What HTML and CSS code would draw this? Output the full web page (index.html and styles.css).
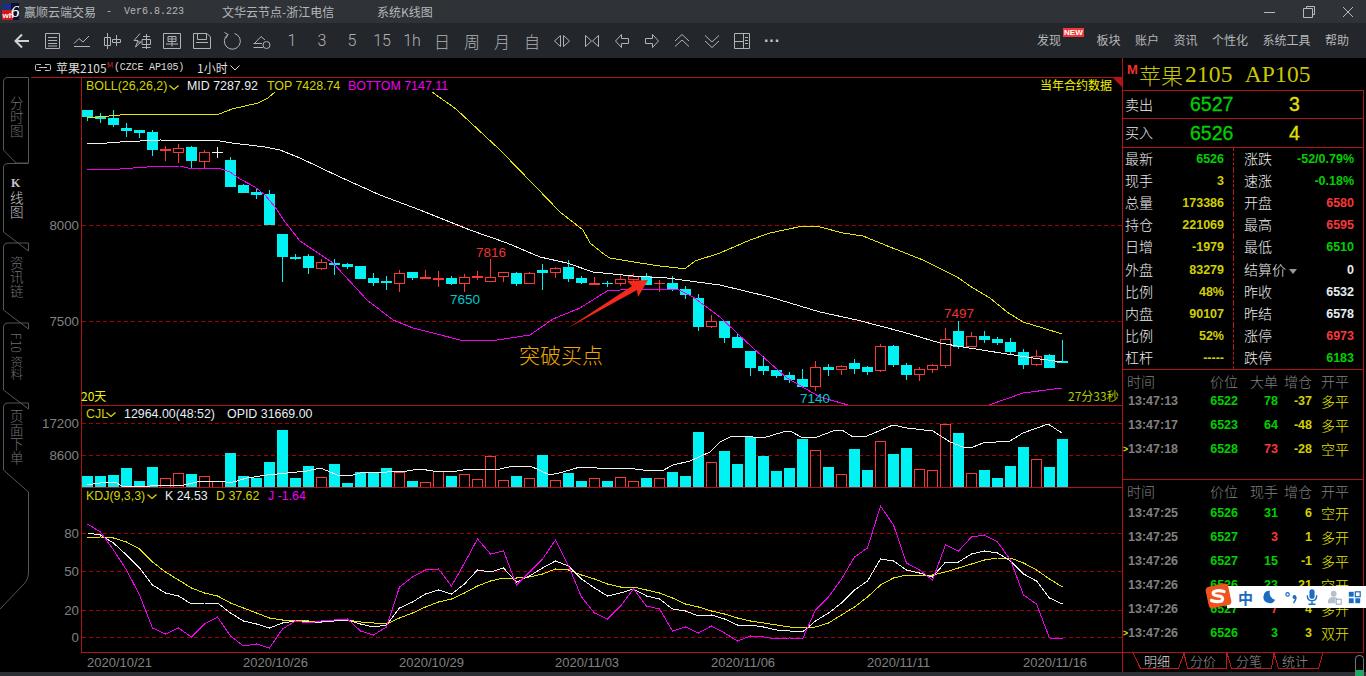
FILE: index.html
```html
<!DOCTYPE html>
<html lang="zh-CN">
<head>
<meta charset="utf-8">
<title>赢顺云端交易</title>
<link rel="stylesheet" href="styles.css">
</head>
<body>
<header class="titlebar">
  <svg class="logo" viewBox="0 0 17 17" width="17" height="17"><rect width="17" height="17" fill="#0c1030"/><rect x="0" y="0" width="9" height="7" fill="#1b2f80"/><rect x="0" y="7" width="11" height="10" fill="#d01818"/><text x="0.5" y="15" class="logo-wh">wh</text><text x="9" y="14" class="logo-six">6</text></svg>
  <span class="app-name">赢顺云端交易</span>
  <span class="app-ver">-  Ver6.8.223</span>
  <span class="app-node">文华云节点-浙江电信</span>
  <span class="app-view">系统K线图</span>
  <div class="winctl">
    <svg viewBox="0 0 12 12" width="12" height="12"><path d="M0 6.500H11"/></svg>
    <svg viewBox="0 0 12 12" width="12" height="12"><path d="M3.500 2.500V0.500H11.500V8.500H9.500M0.500 2.500H9.500V11.500H0.500Z"/></svg>
    <svg viewBox="0 0 12 12" width="12" height="12"><path d="M1 1L11 11M11 1L1 11"/></svg>
  </div>
</header>

<nav class="toolbar">
  <div class="tools">
    <span class="tool"><svg viewBox="0 0 20 20" class="thick"><path d="M17 10H4M10 3.500L3.500 10L10 16.500"/></svg></span>
    <span class="tool"><svg viewBox="0 0 20 20"><path d="M3.500 2.500H17.500V17.500H3.500ZM6 6.500H15M6 9.500H15M6 12.500H15M6 15H15"/></svg></span>
    <span class="tool"><svg viewBox="0 0 20 20"><path d="M2 15.500H18M2 12.500L7 7.500L11 11L17 5"/></svg></span>
    <span class="tool"><svg viewBox="0 0 20 20"><path d="M5.500 2V18M2.500 6.500H8.500V14.500H2.500ZM14.500 4V15M10.500 8.500H18.500V11.500H10.500Z"/></svg></span>
    <span class="tool"><svg viewBox="0 0 20 20"><path d="M8 2.500L2 9.500H6L3.500 16L9 11H5.500M11 5.500H18M10 8.500H18.500V13.500H10ZM14.500 3V18M10 16.500H18.500"/></svg></span>
    <span class="tool"><svg viewBox="0 0 20 20"><path d="M1.500 2.500H18.500V17.500H1.500ZM6 5.500H14V10.500H6ZM6 8H14M10 5.500V15.500M4 13H16"/></svg></span>
    <span class="tool"><svg viewBox="0 0 20 20"><path d="M1.500 2.500H15L18.500 6V17.500H1.500ZM5.500 2.500V8.500H14.500V2.500M4 11.500H16"/></svg></span>
    <span class="tool"><svg viewBox="0 0 20 20"><path d="M6 3.500A8 8 0 1 0 12.500 2.500M2.500 1.500L6 3.500L4 7"/></svg></span>
    <span class="tool"><svg viewBox="0 0 20 20"><path d="M1.500 16.500H11M3 12L9 5.500L13 9M1.500 12.500H10"/><circle cx="14.500" cy="14" r="3.500"/></svg></span>
    <span class="tool tool-txt">1</span>
    <span class="tool tool-txt">3</span>
    <span class="tool tool-txt">5</span>
    <span class="tool tool-txt">15</span>
    <span class="tool tool-txt">1h</span>
    <span class="tool tool-txt">日</span>
    <span class="tool tool-txt">周</span>
    <span class="tool tool-txt">月</span>
    <span class="tool tool-txt">自</span>
    <span class="tool"><svg viewBox="0 0 20 20"><path d="M8.500 4.500L2.500 10L8.500 15.500ZM11.500 4.500L17.500 10L11.500 15.500Z"/></svg></span>
    <span class="tool"><svg viewBox="0 0 20 20"><path d="M3.500 4.500L9.500 10L3.500 15.500ZM16.500 4.500L10.500 10L16.500 15.500Z"/></svg></span>
    <span class="tool"><svg viewBox="0 0 20 20"><path d="M3.500 10L9.500 3.500V7.500H16.500V12.500H9.500V16.500Z"/></svg></span>
    <span class="tool"><svg viewBox="0 0 20 20"><path d="M16.500 10L10.500 3.500V7.500H3.500V12.500H10.500V16.500Z"/></svg></span>
    <span class="tool"><svg viewBox="0 0 20 20"><path d="M3 10L10 3.500L17 10M3 15.500L10 9L17 15.500"/></svg></span>
    <span class="tool"><svg viewBox="0 0 20 20"><path d="M3 4.500L10 11L17 4.500M3 10L10 16.500L17 10"/></svg></span>
    <span class="tool"><svg viewBox="0 0 20 20"><path d="M2.500 2.500H17.500V17.500H2.500ZM11.500 2.500V17.500M2.500 10.500H11.500M13 6.500H16M13 9.500H16M13 12.500H16"/></svg></span>
    <span class="tool tool-dots">···</span>
  </div>
  <div class="menu">
    <span class="menu-new">发现<b class="badge">NEW</b></span>
    <span>板块</span><span>账户</span><span>资讯</span><span>个性化</span><span>系统工具</span><span>帮助</span>
  </div>
</nav>

<main class="main">
  <aside class="sidetabs">
    <svg class="tabshape" viewBox="0 0 29 614" width="29" height="614">
      <path d="M28.500 19.500V105H16L3.500 92V24Q3.500 19.500 8 19.500Z"/>
      <path d="M28.500 105.500H8Q3.500 105.500 3.500 110V174L28.500 193"/>
      <path d="M28.500 193V185H8Q3.500 185 3.500 190V252L28.500 271"/>
      <path d="M28.500 271V265H8Q3.500 265 3.500 270V332L28.500 351"/>
      <path d="M28.500 351V345H8Q3.500 345 3.500 350V412L28.500 434V515Q28.500 522 22 528L0 551"/>
    </svg>
    <span class="vtab">分时图</span>
    <span class="vtab vtab-on"><b>K</b>线图</span>
    <span class="vtab">资讯链</span>
    <span class="vtab vtab-side">F10 资料</span>
    <span class="vtab">页面下单</span>
  </aside>

  <section class="chartcol">
    <div class="charthead">
      <svg class="linkicon" viewBox="0 0 16 8" width="16" height="8"><path d="M6 .5H1.500Q.5 .5 .5 1.500V5.500Q.5 6.500 1.500 6.500H6M10 .5H14.500Q15.500 .5 15.500 1.500V5.500Q15.500 6.500 14.500 6.500H10M4 3.500H12"/></svg>
      <span class="sym">苹果2105<sup>M</sup></span>
      <span class="code">(CZCE AP105)</span>
      <span class="period">1小时</span>
      <svg class="chev" viewBox="0 0 10 6" width="10" height="6"><path d="M.5 .5L5 5L9.500 .5"/></svg>
    </div>
    <svg id="chart" class="chart" viewBox="29 77 1093 595" width="1093" height="595">
      <g id="layer"></g>
      <g class="frame">
        <path d="M31 77.500H1122M81.500 77V652.500M81 405.500H1122M81 487.500H1122M81 652.500H1122"/>
      </g>
      <polygon class="corner" points="1113,78 1122,78 1122,87"/>
      <polygon class="arrow" points="568,328 632,286 627,281 648,280 638,297 637,290"/>

      <text class="lg y" x="86" y="90">BOLL(26,26,2)</text>
      <path class="chv" d="M169.500 85.500L174 89.500L178.500 85.500"/>
      <text class="lg w" x="187" y="90">MID 7287.92</text>
      <text class="lg y" x="267" y="90">TOP 7428.74</text>
      <text class="lg m" x="348" y="90">BOTTOM 7147.11</text>
      <text class="cj y2" x="1040" y="90">当年合约数据</text>

      <text class="mk r" x="476" y="257">7816</text>
      <text class="mk c" x="450" y="304">7650</text>
      <text class="mk r" x="944" y="318">7497</text>
      <text class="mk c" x="800" y="403">7140</text>
      <text class="cj y2" x="81" y="401">20天</text>
      <text class="cj y3" x="1068" y="401">27分33秒</text>
      <text class="note" x="519" y="363">突破买点</text>

      <text class="ax" x="79" y="230">8000</text>
      <text class="ax" x="79" y="326">7500</text>
      <text class="ax" x="79" y="428">17200</text>
      <text class="ax" x="79" y="460">8600</text>
      <text class="ax" x="79" y="538">80</text>
      <text class="ax" x="79" y="576">50</text>
      <text class="ax" x="79" y="615">20</text>
      <text class="ax" x="79" y="642">0</text>

      <text class="lg y" x="86" y="418">CJL</text>
      <path class="chv" d="M106.500 412.500L111 416.500L115.500 412.500"/>
      <text class="lg w" x="124" y="418">12964.00(48:52)</text>
      <text class="lg w" x="227" y="418">OPID 31669.00</text>
      <text class="lg y" x="86" y="500">KDJ(9,3,3)</text>
      <path class="chv" d="M147.500 494.500L152 498.500L156.500 494.500"/>
      <text class="lg w" x="165" y="500">K 24.53</text>
      <text class="lg y" x="216" y="500">D 37.62</text>
      <text class="lg m" x="268" y="500">J -1.64</text>

      <text class="dt" x="87" y="667">2020/10/21</text>
      <text class="dt" x="243" y="667">2020/10/26</text>
      <text class="dt" x="399" y="667">2020/10/29</text>
      <text class="dt" x="555" y="667">2020/11/03</text>
      <text class="dt" x="711" y="667">2020/11/06</text>
      <text class="dt" x="867" y="667">2020/11/11</text>
      <text class="dt" x="1023" y="667">2020/11/16</text>
    </svg>
  </section>

  <aside class="quote">
    <div class="qtitle"><b class="qm">M</b><span class="qname">苹果</span><span class="qcode">2105&nbsp;&nbsp;AP105</span></div>
    <div class="qbox">
      <div class="bidask bid1"><span class="lb">卖出</span><span class="bp">6527</span><span class="bv">3</span></div>
      <div class="bidask bid2"><span class="lb">买入</span><span class="bp">6526</span><span class="bv">4</span></div>
      <div class="qgrid">
        <div class="qc"><span class="lb">最新</span><span class="v g">6526</span></div><div class="qc"><span class="lb">涨跌</span><span class="v g">-52/0.79%</span></div>
        <div class="qc"><span class="lb">现手</span><span class="v y">3</span></div><div class="qc"><span class="lb">速涨</span><span class="v g">-0.18%</span></div>
        <div class="qc"><span class="lb">总量</span><span class="v y">173386</span></div><div class="qc"><span class="lb">开盘</span><span class="v r">6580</span></div>
        <div class="qc"><span class="lb">持仓</span><span class="v y">221069</span></div><div class="qc"><span class="lb">最高</span><span class="v r">6595</span></div>
        <div class="qc"><span class="lb">日增</span><span class="v y">-1979</span></div><div class="qc"><span class="lb">最低</span><span class="v g">6510</span></div>
        <div class="qc"><span class="lb">外盘</span><span class="v y">83279</span></div><div class="qc"><span class="lb">结算价<i class="tri"></i></span><span class="v w">0</span></div>
        <div class="qc"><span class="lb">比例</span><span class="v y">48%</span></div><div class="qc"><span class="lb">昨收</span><span class="v w">6532</span></div>
        <div class="qc"><span class="lb">内盘</span><span class="v y">90107</span></div><div class="qc"><span class="lb">昨结</span><span class="v w">6578</span></div>
        <div class="qc"><span class="lb">比例</span><span class="v y">52%</span></div><div class="qc"><span class="lb">涨停</span><span class="v r">6973</span></div>
        <div class="qc"><span class="lb">杠杆</span><span class="v y">-----</span></div><div class="qc"><span class="lb">跌停</span><span class="v g">6183</span></div>
      </div>
      <div class="ticks ticks-a">
        <div class="tr th th-a"><i></i><span>时间</span><span>价位</span><span>大单</span><span>增仓</span><span>开平</span></div>
        <div class="tr"><i></i><span class="t">13:47:13</span><span class="g">6522</span><span class="g">78</span><span class="y">-37</span><span class="k">多平</span></div>
        <div class="tr"><i></i><span class="t">13:47:17</span><span class="g">6523</span><span class="g">64</span><span class="y">-48</span><span class="k">多平</span></div>
        <div class="tr"><i>&gt;</i><span class="t">13:47:18</span><span class="g">6528</span><span class="r">73</span><span class="y">-28</span><span class="k">空平</span></div>
      </div>
      <div class="ticks ticks-b">
        <div class="tr th th-b"><i></i><span>时间</span><span>价位</span><span>现手</span><span>增仓</span><span>开平</span></div>
        <div class="tr"><i></i><span class="t">13:47:25</span><span class="g">6526</span><span class="g">31</span><span class="y">6</span><span class="k">空开</span></div>
        <div class="tr"><i></i><span class="t">13:47:25</span><span class="g">6527</span><span class="r">3</span><span class="y">1</span><span class="k">多开</span></div>
        <div class="tr"><i></i><span class="t">13:47:26</span><span class="g">6527</span><span class="g">15</span><span class="y">-1</span><span class="k">多平</span></div>
        <div class="tr"><i></i><span class="t">13:47:26</span><span class="g">6526</span><span class="g">23</span><span class="y">21</span><span class="k">空开</span></div>
        <div class="tr"><i></i><span class="t">13:47:26</span><span class="g">6527</span><span class="r">7</span><span class="y">4</span><span class="k">多开</span></div>
        <div class="tr"><i>&gt;</i><span class="t">13:47:26</span><span class="g">6526</span><span class="g">3</span><span class="y">3</span><span class="k">双开</span></div>
      </div>
    </div>
    <div class="qtabs">
      <svg class="qtabshape" viewBox="0 0 200 17" width="200" height="17"><path d="M10 0L17.500 15.500H55.500L61 0M61 0L64.500 15.500H103.500L104 0M104 0L108.500 15.500H148.500L151 0M151 0L155.500 15.500H195.500L200 0"/></svg>
      <span class="qtab qtab-on">明细</span><span class="qtab">分价</span><span class="qtab">分笔</span><span class="qtab">统计</span>
    </div>
  </aside>
</main>
<footer class="statusbar"></footer>

<div class="pill"><span></span></div>

<div class="ime">
  <svg class="ime-logo" viewBox="0 0 28 28" width="28" height="28"><rect x="3" y="3" width="23" height="22" rx="4" fill="#f0541e" transform="rotate(-12 14 14)"/><path d="M20 9.500Q13 7.500 9.500 10Q8 12.500 12 13.500L17 14.500Q20 16.500 17.500 19Q13 20.500 7.500 18.500" fill="none" stroke="#fff" stroke-width="3.200" stroke-linecap="round"/></svg>
  <span class="ime-zh">中</span>
  <svg viewBox="0 0 16 16" width="14" height="14"><path d="M9 1A7 7 0 1 0 15 11A8 8 0 0 1 9 1Z" fill="#1a6cc0"/></svg>
  <svg viewBox="0 0 14 16" width="12" height="14"><circle cx="3" cy="5" r="2" fill="none" stroke="#1a6cc0" stroke-width="1.400"/><circle cx="11" cy="8" r="2.200" fill="#1a6cc0"/><path d="M12.800 8Q12.800 12 10 15" fill="none" stroke="#1a6cc0" stroke-width="1.800"/></svg>
  <svg viewBox="0 0 14 20" width="12" height="18"><rect x="4" y="1" width="6" height="11" rx="3" fill="#1a6cc0"/><path d="M1.500 8Q1.500 14.500 7 14.500Q12.500 14.500 12.500 8M7 14.500V18M3 18.500H11" fill="none" stroke="#1a6cc0" stroke-width="1.600"/></svg>
  <svg viewBox="0 0 18 18" width="15" height="15"><circle cx="8" cy="4.500" r="3.500" fill="#b4c0cc"/><path d="M1 15Q1 8.500 8 8.500Q12 8.500 13 10.500H10V16H1Z" fill="#b4c0cc"/><rect x="11" y="11" width="6" height="6" fill="#fff" stroke="#8494a4"/></svg>
  <svg class="ime-grid" viewBox="0 0 16 16" width="13" height="13"><rect x="1" y="1" width="6" height="6" fill="#1a6cc0"/><rect x="9" y="1" width="6" height="6" fill="none" stroke="#1a6cc0" stroke-width="1.500"/><rect x="1" y="9" width="6" height="6" fill="#1a6cc0"/><rect x="9" y="9" width="6" height="6" fill="#1a6cc0"/></svg>
</div>

<script src="chart.js"></script>
</body>
</html>
```

FILE: styles.css
```css
* { box-sizing: border-box; }
html, body { margin: 0; padding: 0; }
body {
  width: 1366px; height: 676px; overflow: hidden; position: relative;
  background: #000; color: #ddd;
  display: flex; flex-direction: column;
  font: 12px "Liberation Sans", "Noto Sans CJK SC", sans-serif;
}

/* title bar */
.titlebar {
  height: 23px; flex: none; background: #2f3338; color: #b4b7ba;
  display: flex; align-items: center; padding-left: 2px;
  font: 12px "Noto Sans CJK SC", sans-serif;
}
.logo { flex: none; }
.logo-wh { font: bold 8px "Liberation Sans", sans-serif; fill: #fff; }
.logo-six { font: italic 17px "Liberation Serif", serif; fill: #fff; }
.app-name { margin-left: 5px; width: 82px; }
.app-ver { font: 10px "Liberation Mono", monospace; width: 116px; white-space: pre; }
.app-node { width: 155px; }
.winctl { margin-left: auto; display: flex; gap: 27px; padding-right: 12px; }
.winctl svg { fill: none; stroke: #b8bbbe; stroke-width: 1; }

/* toolbar */
.toolbar {
  height: 35px; flex: none; background: #23262b;
  display: flex; align-items: center; justify-content: space-between;
  padding: 0 17px 0 7px; color: #b4b7ba;
}
.tools { display: flex; }
.tool {
  width: 30px; height: 24px; display: flex; align-items: center; justify-content: center;
}
.tool svg { width: 20px; height: 20px; fill: none; stroke: #b0b3b6; stroke-width: 1; }
.tool svg.thick { stroke: #d0d3d6; stroke-width: 2; }
.tool-txt { font: 300 16px Roboto, "Noto Sans CJK SC", sans-serif; color: #b0b3b6; }
.tool-dots { font: bold 16px "Liberation Sans", sans-serif; color: #c0c3c6; letter-spacing: 0; }
.menu { display: flex; gap: 14.500px; margin-bottom: 2px; font: 12px "Noto Sans CJK SC", sans-serif; }
.menu-new { position: relative; margin-right: 21px; }
.badge {
  position: absolute; left: 26px; top: -3px; width: 21px; height: 9px;
  background: #f03a3a; color: #fff; font: bold 8px/9px "Liberation Sans", sans-serif; text-align: center;
}

/* main */
.main { height: 614px; flex: none; display: flex; }

.sidetabs {
  width: 29px; flex: none; position: relative; padding-top: 19px;
  display: flex; flex-direction: column;
}
.tabshape { position: absolute; left: 0; top: 0; fill: none; stroke: #555; stroke-width: 1; }
.vtab {
  height: 80px; width: 29px; padding-left: 3px; display: flex; align-items: center; justify-content: center;
  writing-mode: vertical-rl; position: relative;
  font: 300 13.500px/1 "Noto Sans CJK SC", sans-serif; color: #707070; letter-spacing: .5px;
}
.vtab b { font: bold 12px "Liberation Serif", serif; writing-mode: horizontal-tb; }
.vtab-on { color: #c8c8c8; }
.vtab-side { font-size: 12.500px; letter-spacing: 0; white-space: pre; }

.chartcol { width: 1093px; flex: none; display: flex; flex-direction: column; }
.charthead {
  height: 19px; flex: none; display: flex; align-items: center; padding-left: 6px;
  font: 12px "Noto Sans CJK SC", sans-serif; color: #ddd;
}
.linkicon { fill: none; stroke: #c0c0c0; stroke-width: 1; flex: none; }
.sym { margin-left: 5px; width: 58px; }
.sym sup { color: #d02020; font-size: 8px; line-height: 0; vertical-align: 5px; }
.code { font: 10px "Liberation Mono", monospace; letter-spacing: -.15px; width: 83px; white-space: pre; }
.period { width: 33px; }
.chev { fill: none; stroke: #ddd; stroke-width: 1; }
.chart { display: block; flex: none; }
.frame path { fill: none; stroke: #b01414; stroke-width: 1; shape-rendering: crispEdges; }
.corner { fill: #b01414; }
.arrow { fill: #f5281e; }

.chart text { white-space: pre; }
.lg { font: 12.400px "Liberation Sans", sans-serif; }
.lg.y { fill: #d4d400; }
.lg.w { fill: #e8eef4; }
.lg.m { fill: #f000f0; }
.chv { fill: none; stroke: #e0e000; stroke-width: 1.200; }
.cj { font: 12px "Noto Sans CJK SC", sans-serif; }
.y2 { fill: #f0f000; }
.y3 { fill: #b4c800; }
.mk { font: 13.500px "Liberation Sans", sans-serif; }
.mk.r { fill: #f03232; }
.mk.c { fill: #00c8d0; }
.note { font: 300 21px "Noto Sans CJK SC", sans-serif; fill: #eeaa00; }
.ax { font: 13.300px "Liberation Sans", sans-serif; fill: #808080; text-anchor: end; }
.dt { font: 13px "Liberation Sans", sans-serif; fill: #808080; }

.dash { stroke: #a00000; stroke-width: 1; stroke-dasharray: 4 3; fill: none; shape-rendering: crispEdges; }
.ln { fill: none; stroke-width: 1; shape-rendering: crispEdges; }
.ln-y { stroke: #e6e600; }
.ln-w { stroke: #f0f0f0; }
.ln-m { stroke: #f000f0; }
.cb { fill: #00f2f2; shape-rendering: crispEdges; }
.cw { stroke: #00f2f2; stroke-width: 1; fill: none; shape-rendering: crispEdges; }
.rb { fill: #f83838; shape-rendering: crispEdges; }
.rw { stroke: #f83838; stroke-width: 1; fill: none; shape-rendering: crispEdges; }
.wb { stroke: #f0f0f0; stroke-width: 1; fill: none; shape-rendering: crispEdges; }

/* quote panel */
.quote { width: 244px; flex: none; border-left: 1px solid #b01414; display: flex; flex-direction: column; position: relative; }
.qtitle { height: 32px; flex: none; display: flex; align-items: flex-start; padding: 3px 0 0 4px; color: #c8c800; }
.qm { font: bold 13px "Liberation Sans", sans-serif; color: #f03030; width: 12px; margin-top: 1px; }
.qname { font: 300 22px/26px "Noto Sans CJK SC", sans-serif; width: 46px; }
.qcode { font: 23.500px/27px "Liberation Serif", serif; word-spacing: 0; letter-spacing: .15px; }
.qbox { height: 563px; flex: none; width: 242px; margin-left: -1px; border: 1px solid #b01414; display: flex; flex-direction: column; }
.lb { font: 300 14px/1 "Noto Sans CJK SC", sans-serif; color: #eee; white-space: nowrap; margin-bottom: 2px; }
.bidask { display: grid; grid-template-columns: 65px 99px 1fr; align-items: center; padding-left: 2px; border-bottom: 1px solid #b01414; flex: none; }
.bid1 { height: 28px; }
.bid2 { height: 29px; }
.bp { font: 19.500px "Liberation Sans", sans-serif; color: #00d000; -webkit-text-stroke: .3px #00d000; }
.bv { font: 19.500px "Liberation Sans", sans-serif; color: #e0e000; -webkit-text-stroke: .3px #e0e000; }
.qgrid {
  height: 222px; flex: none; display: grid; grid-template-columns: 111px 1fr; grid-auto-rows: 22.100px;
  border-bottom: 1px solid #b01414;
}
.qc { display: flex; justify-content: space-between; align-items: center; padding: 0 9px 0 10px; }
.qc:nth-child(odd) { padding: 0 9px 0 2px; border-right: 1px dashed #c01818; }
.v { font: bold 12.500px "Liberation Sans", sans-serif; }
.tri {
  display: inline-block; width: 0; height: 0; margin-left: 3px; vertical-align: 1px;
  border: 4px solid transparent; border-top: 5px solid #999; border-bottom: 0;
}
.g { color: #00d000; }
.y { color: #d0d000; }
.r { color: #f83838; }
.w { color: #e4ecf4; }
.k { color: #e8e800; }
.ticks-a { height: 110px; flex: none; border-bottom: 1px solid #b01414; }
.ticks-b { flex: 1; }
.tr {
  display: grid; grid-template-columns: 5px 82px 28px 40px 34px 37px; height: 24px; align-items: center;
  font: bold 12.500px "Liberation Sans", sans-serif; white-space: nowrap;
}
.tr i { font: bold 8.500px "Liberation Sans", sans-serif; color: #e8e800; }
.tr span:nth-child(4), .tr span:nth-child(5) { text-align: right; }
.tr span:nth-child(3) { text-align: right; }
.tr span:last-child { padding-left: 9px; font: 300 14px "Noto Sans CJK SC", sans-serif; }
.t { color: #808080; }
.th { align-items: start; padding-top: 3px; color: #808080; font: 300 14px/16px "Noto Sans CJK SC", sans-serif; }
.th span:last-child { font: 300 14px/16px "Noto Sans CJK SC", sans-serif; }
.th-a { height: 19px; }
.th-b { height: 21px; }
.th span:nth-child(2) { margin-left: -1px; }

.qtabs { position: relative; height: 19px; flex: none; display: flex; padding-left: 11px; font: 300 13px/15px "Noto Sans CJK SC", sans-serif; }
.qtabshape { position: absolute; left: 0; top: 0; fill: none; stroke: #c01818; stroke-width: 1; shape-rendering: crispEdges; }
.qtab { width: 46px; text-align: center; color: #999; position: relative; }
.qtab-on { color: #ddd; }

.statusbar { height: 4px; flex: none; background: #2c2f34; }

.pill {
  position: absolute; left: 1355px; top: 655px; width: 9px; height: 21px;
  border: 1px solid #777; border-bottom: 0; border-radius: 5px 5px 0 0; overflow: hidden;
  display: flex; align-items: flex-end;
}
.pill span { display: block; width: 100%; height: 6px; background: #10b060; }

.ime {
  position: absolute; left: 1227px; top: 586px; width: 139px; height: 22px; background: #fff;
  display: flex; align-items: center; gap: 9px; padding-left: 11px;
}
.ime svg { flex: none; }
.ime-logo { position: absolute; left: -23px; top: -4px; }
.ime-zh { font: bold 15px "Noto Sans CJK SC", sans-serif; color: #1a6cc0; }
.ime-grid { margin-left: -3px; }
```

FILE: chart.js
```js
(function () {
  var NS = 'http://www.w3.org/2000/svg';
  var layer = document.getElementById('layer');
  function add(tag, attrs) {
    var e = document.createElementNS(NS, tag);
    for (var k in attrs) e.setAttribute(k, attrs[k]);
    layer.appendChild(e);
    return e;
  }
  function line(cls, pts) {
    add('polyline', { 'class': 'ln ' + cls, points: pts.map(function (p) { return p.join(','); }).join(' ') });
  }
  function series(cls, ys) {
    line(cls, ys.map(function (y, i) { return [87.5 + 13 * i, y]; }));
  }

  [225, 321, 423, 455, 533, 571, 610, 637].forEach(function (y) {
    add('path', { 'class': 'dash', d: 'M82 ' + (y + 0.5) + 'H1122' });
  });

  // [type, body top, body bottom, wick high, wick low]
  var candles = [
    ['c',110,117,110,121],['c',116,119,113,123],['c',118,125,110,127],['c',128,131,123,137],
    ['c',130,133,130,138],['c',132,150,130,156],['r',149,151,146,161],['r',148,153,144,163],
    ['c',147,161,146,168],['r',152,162,150,168],['w',152,153,147,158],['c',160,187,157,187],
    ['c',185,193,184,193],['c',192,195,188,199],['c',194,225,190,225],['c',234,257,234,282],
    ['c',257,259,254,260],['c',256,268,254,274],['r',262,269,259,270],['c',263,265,259,275],
    ['c',264,267,263,269],['c',266,279,266,279],['c',278,283,273,286],['c',281,283,276,290],
    ['r',273,284,270,292],['c',272,278,272,280],['r',277,279,270,279],['r',278,280,271,287],
    ['c',278,284,276,285],['r',277,284,274,292],['r',276,278,271,280],['r',277,282,259,282],
    ['r',272,277,272,282],['c',273,284,272,286],['r',273,284,272,284],['c',270,273,264,290],
    ['r',268,273,267,278],['c',267,279,260,282],['c',278,283,276,284],['r',283,285,277,285],
    ['c',283,284,281,287],['r',279,284,274,286],['r',276,280,274,281],['c',276,285,273,285],
    ['r',283,284,280,292],['c',283,289,276,291],['c',289,295,286,299],['c',298,327,294,331],
    ['r',321,327,315,328],['c',321,338,321,343],['c',337,348,334,348],['c',351,368,351,376],
    ['c',366,371,356,375],['c',370,376,370,378],['c',375,380,372,383],['c',379,387,369,387],
    ['r',367,387,361,391],['c',367,370,364,376],['r',366,370,365,375],['c',363,369,359,374],
    ['c',367,372,366,375],['r',346,371,344,372],['c',346,365,345,367],['c',365,375,363,380],
    ['r',369,375,367,381],['r',365,370,364,373],['r',339,366,328,368],['c',331,347,321,349],
    ['r',336,347,332,347],['c',336,340,331,343],['c',339,343,337,345],['c',342,352,338,354],
    ['c',352,365,349,369],['r',356,365,350,366],['c',355,368,354,368],['c',361,363,340,363]
  ];
  var vol = [476,476,475,468,481,467,478,473,474,476,481,453,476,478,462,430,478,466,477,464,
    483,472,473,468,472,481,482,471,476,474,479,456,480,476,478,455,480,473,481,478,
    481,477,481,478,478,472,476,432,462,451,464,437,456,471,468,439,450,467,474,449,
    470,441,454,448,469,470,424,433,473,470,478,466,447,459,467,439];

  candles.forEach(function (k, i) {
    var cx = 87.5 + 13 * i, t = k[0], top = k[1], bot = k[2], hi = k[3], lo = k[4];
    var flat = bot - top <= 3;
    if (t === 'w') {
      add('path', { 'class': 'wb', d: 'M' + cx + ' ' + hi + 'V' + lo + 'M' + (cx - 5.5) + ' ' + (top + 0.5) + 'H' + (cx + 5.5) });
    } else if (t === 'c') {
      add('path', { 'class': 'cw', d: 'M' + cx + ' ' + hi + 'V' + lo });
      add('rect', { 'class': 'cb', x: cx - 5.5, y: top, width: 11, height: bot - top });
    } else {
      add('path', { 'class': 'rw', d: 'M' + cx + ' ' + hi + 'V' + top + 'M' + cx + ' ' + bot + 'V' + lo });
      if (flat) add('rect', { 'class': 'rb', x: cx - 5.5, y: top, width: 11, height: bot - top });
      else add('rect', { 'class': 'rw', x: cx - 5, y: top + 0.5, width: 10, height: bot - top - 1 });
    }
    var v = vol[i];
    if (t === 'c') add('rect', { 'class': 'cb', x: cx - 5.5, y: v, width: 11, height: 487 - v });
    else add('rect', { 'class': 'rw', x: cx - 5, y: v + 0.5, width: 10, height: 487 - v });
  });

  // Bollinger bands
  line('ln-y', [[87,118],[120,115],[133,114.5],[218,114.5],[232,109],[258,103],[268,98],[275,92]]);
  line('ln-y', [[432,92],[456,109],[500,150],[535,186],[560,212],[583,230],[590,243],[605,255],[610,258],[640,263],[660,266],[678,268],[686,268],[695,261],[720,253],[750,240],[770,233],[803,226],[820,227],[843,233],[863,236],[890,247],[923,260],[957,277],[973,288],[990,298],[1007,312],[1023,322],[1043,328],[1062,334]]);
  line('ln-w', [[87,143],[107,143],[120,142],[140,141],[160,140],[220,141],[232,143],[265,147],[280,150],[300,158],[340,177],[380,195],[420,210],[470,230],[507,243],[540,257],[567,263],[593,272],[633,276],[667,278],[720,285],[770,297],[820,312],[857,320],[903,332],[940,343],[963,347],[1007,354],[1033,358],[1062,362]]);
  line('ln-m', [[87,169],[120,169],[133,168],[147,167],[180,166],[188,168],[218,168],[230,172],[240,179],[255,187],[265,195],[275,207],[285,222],[300,241],[333,263],[367,300],[393,320],[413,328],[433,333],[460,340],[497,340],[530,335],[553,319],[580,308],[607,291],[633,289],[677,289],[693,297],[720,317],[753,348],[787,378],[820,397],[848,405]]);
  line('ln-m', [[989,405],[1023,393],[1062,388]]);

  // volume average
  line('ln-w', [[87,485],[100,483],[115,482],[122,486],[150,486],[160,485],[180,486],[197,482],[212,481],[222,481],[230,483],[247,478],[267,475],[287,473],[307,471],[320,468],[328,471],[337,475],[350,476],[360,473],[387,472],[407,471],[420,469],[433,471],[457,471],[470,469],[500,469],[513,466],[530,466],[550,475],[563,472],[580,467],[597,468],[627,468],[643,470],[662,471],[673,465],[690,461],[710,452],[720,442],[730,437],[743,436],[763,438],[783,432],[790,431],[803,438],[817,437],[833,431],[842,430],[853,437],[867,436],[893,425],[907,428],[933,431],[950,442],[963,447],[973,447],[983,443],[1010,441],[1023,433],[1048,424],[1062,433]]);

  // KDJ
  series('ln-y', [538,537,538,542,549,562,572,580,588,593,596,603,608,613,618,620,620,621,621,620,620,622,623,624,618,613,607,602,599,593,586,581,578,578,577,574,569,570,575,579,584,587,587,590,593,598,604,607,611,614,618,621,623,625,627,628,627,623,615,607,597,585,578,575,575,575,572,568,564,560,558,558,563,570,579,587]);
  series('ln-w', [533,535,543,555,568,585,593,596,604,603,603,613,621,624,628,623,621,622,622,621,620,624,627,625,608,602,594,590,594,584,570,572,568,582,576,568,561,566,579,588,596,593,589,596,599,609,611,616,615,619,625,625,627,630,631,632,621,613,603,590,581,559,561,570,573,577,562,562,554,551,553,561,574,581,598,604]);
  series('ln-m', [524,532,550,570,595,628,634,628,637,624,617,636,646,644,648,629,621,623,621,620,619,631,635,627,587,577,570,569,586,563,539,554,551,585,572,559,540,566,597,613,619,606,589,606,609,631,627,633,626,633,641,636,637,639,638,639,610,597,579,557,548,506,525,563,570,580,545,551,537,535,542,560,595,604,638,639]);
})();
```
